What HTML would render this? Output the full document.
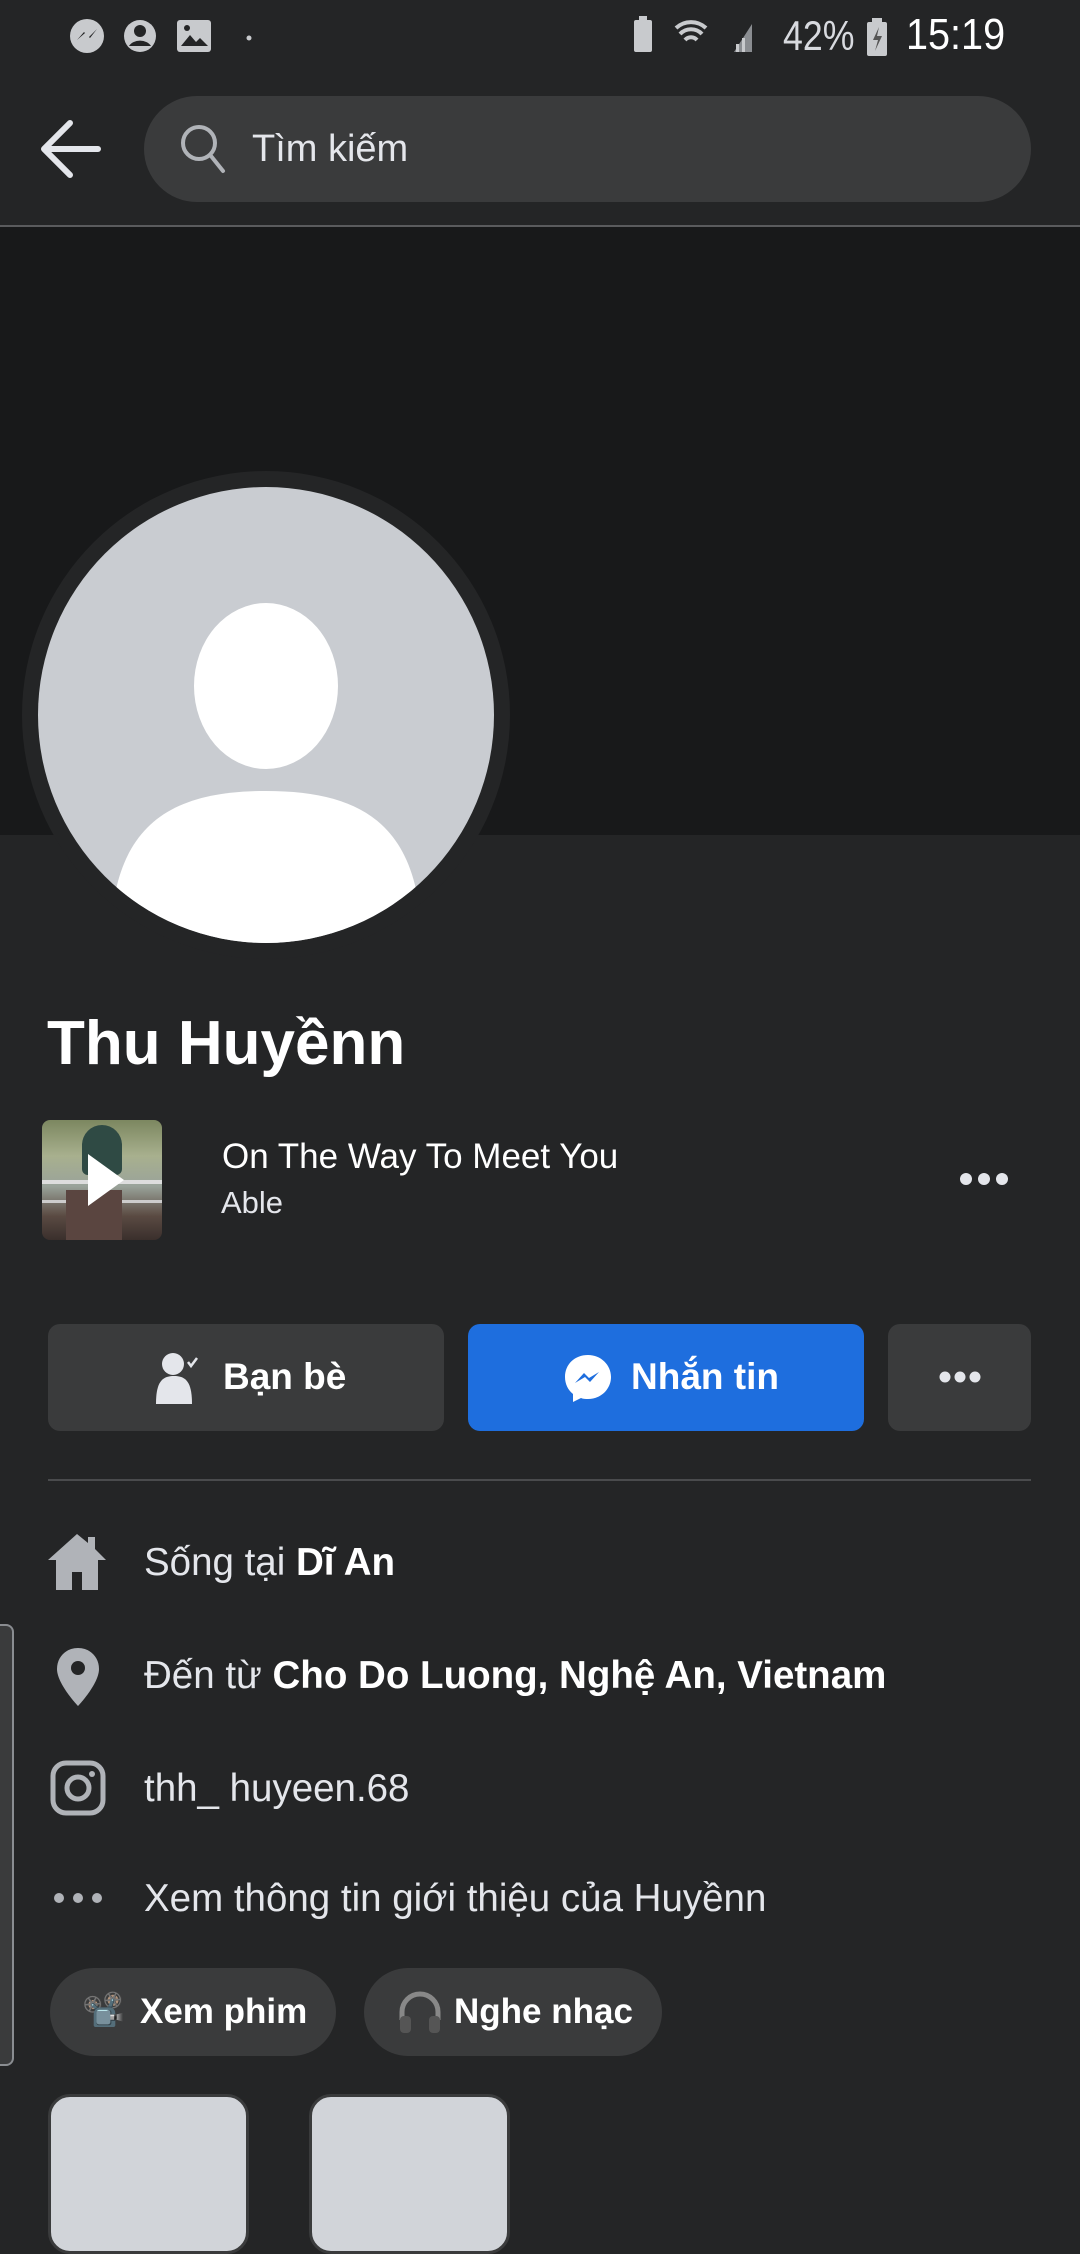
<!DOCTYPE html>
<html><head><meta charset="utf-8"><style>
*{margin:0;padding:0;box-sizing:border-box}
body{width:1080px;height:2220px;background:#242526;font-family:"Liberation Sans","Noto Sans CJK SC",sans-serif;color:#e4e6eb;position:relative;overflow:hidden}
.a{position:absolute}
.t{white-space:nowrap}
</style></head><body>
<div class="a" style="left:0;top:0;width:1080px;height:226px;background:#242526"></div>
<svg class="a" style="top:12px;left:66px" width="200" height="48" viewBox="0 0 200 48">
<circle cx="21" cy="24" r="17" fill="#c8cacd"/><path d="M11 28l7-8 5 5 8-8-7 9-5-5z" fill="#242526"/>
<circle cx="74" cy="24" r="16" fill="#c8cacd"/><circle cx="74" cy="19" r="6" fill="#242526"/><path d="M63 34a12 9 0 0 1 22 0z" fill="#242526"/>
<rect x="111" y="8" width="34" height="32" rx="3" fill="#c8cacd"/><path d="M115 34l9-11 6 7 4-4 8 8z" fill="#242526"/><circle cx="121" cy="16" r="3" fill="#242526"/>
<circle cx="183" cy="26" r="2.5" fill="#c8cacd"/>
</svg>
<svg class="a" style="left:632px;top:14px" width="140" height="44" viewBox="0 0 140 44">
<rect x="2" y="6" width="18" height="32" rx="2" fill="#c8cacd"/><rect x="7" y="2" width="8" height="5" fill="#c8cacd"/>
<path d="M44 14a22 22 0 0 1 30 0M48 20a15 15 0 0 1 22 0M53 26a8 8 0 0 1 12 0" stroke="#c8cacd" stroke-width="4" fill="none"/>
<path d="M102 38l18-28v28z" fill="#8a8d91"/><rect x="104" y="30" width="3" height="8" fill="#c8cacd"/><rect x="110" y="24" width="3" height="14" fill="#c8cacd"/>
</svg>
<div class="a t" style="left:783px;top:12px;font-size:42px;color:#d8dadf;transform:scaleX(0.85);transform-origin:left">42%</div>
<svg class="a" style="left:866px;top:18px" width="22" height="40"><rect x="1" y="4" width="20" height="34" rx="2" fill="#c8cacd"/><rect x="6" y="0" width="10" height="5" fill="#c8cacd"/><path d="M13 9l-6 13h5l-3 11 7-15h-5z" fill="#555"/></svg>
<div class="a t" style="left:906px;top:10px;font-size:44px;color:#fff;transform:scaleX(0.9);transform-origin:left">15:19</div>
<svg class="a" style="left:38px;top:118px" width="66" height="62" viewBox="0 0 66 62"><path d="M60 31H8M32 5L6 31l26 26" stroke="#e4e6eb" stroke-width="6" fill="none" stroke-linecap="round" stroke-linejoin="round"/></svg>
<div class="a" style="left:144px;top:96px;width:887px;height:106px;border-radius:53px;background:#3a3b3c"></div>
<svg class="a" style="left:178px;top:122px" width="50" height="56"><circle cx="21" cy="21" r="16" stroke="#b0b3b8" stroke-width="4" fill="none"/><path d="M33 34l12 15" stroke="#b0b3b8" stroke-width="4" stroke-linecap="round"/></svg>
<div class="a t" style="left:252px;top:128px;font-size:38px;color:#e4e6eb">Tìm kiếm</div>
<div class="a" style="left:0;top:225px;width:1080px;height:2px;background:#5a5b5d"></div>
<div class="a" style="left:0;top:227px;width:1080px;height:608px;background:#18191a"></div>
<svg class="a" style="left:22px;top:471px" width="490" height="490" viewBox="0 0 490 490">
<defs><clipPath id="c"><circle cx="244" cy="244" r="228"/></clipPath></defs>
<circle cx="244" cy="244" r="244" fill="#242526"/>
<circle cx="244" cy="244" r="228" fill="#c9ccd1"/>
<g clip-path="url(#c)"><ellipse cx="244" cy="215" rx="72" ry="83" fill="#fff"/><path d="M88 480C88 360 140 320 244 320S400 360 400 480z" fill="#fff"/></g>
</svg>
<div class="a t" style="left:47px;top:1008px;font-size:62px;font-weight:bold;color:#fff">Thu Huyềnn</div>
<div class="a" style="left:42px;top:1120px;width:120px;height:120px;border-radius:8px;overflow:hidden;background:linear-gradient(180deg,#7c8760 0%,#a8b08e 30%,#9aa39a 55%,#5a4a42 80%,#3a2f2c 100%)">
<div class="a" style="left:0;top:60px;width:120px;height:4px;background:#ddd"></div>
<div class="a" style="left:0;top:80px;width:120px;height:3px;background:#ccc"></div>
<div class="a" style="left:24px;top:70px;width:56px;height:50px;background:#5a4540"></div>
<div class="a" style="left:40px;top:5px;width:40px;height:50px;border-radius:20px 20px 6px 6px;background:#2f4a44"></div>
</div>
<svg class="a" style="left:84px;top:1150px" width="44" height="60"><path d="M4 4l36 26-36 26z" fill="#fff"/></svg>
<div class="a t" style="left:222px;top:1137px;font-size:35px;color:#fff">On The Way To Meet You</div>
<div class="a t" style="left:221px;top:1185px;font-size:31px;color:#e4e6eb">Able</div>
<svg class="a" style="left:958px;top:1170px" width="52" height="18"><circle cx="8" cy="9" r="6" fill="#e4e6eb"/><circle cx="26" cy="9" r="6" fill="#e4e6eb"/><circle cx="44" cy="9" r="6" fill="#e4e6eb"/></svg>
<div class="a" style="left:48px;top:1324px;width:396px;height:107px;border-radius:12px;background:#3a3b3c"></div>
<svg class="a" style="left:154px;top:1352px" width="44" height="52"><circle cx="19" cy="12" r="11" fill="#e4e6eb"/><path d="M2 52c0-22 6-28 18-28s18 6 18 28z" fill="#e4e6eb"/><path d="M34 10l3 4 6-8" stroke="#e4e6eb" stroke-width="2.5" fill="none"/></svg>
<div class="a t" style="left:223px;top:1356px;font-size:37px;font-weight:bold;color:#fff">Bạn bè</div>
<div class="a" style="left:468px;top:1324px;width:396px;height:107px;border-radius:12px;background:#1e6ede"></div>
<svg class="a" style="left:563px;top:1353px" width="50" height="50" viewBox="0 0 50 50"><path d="M25 2C12 2 2 11 2 24c0 7 3 13 8 17v8l8-4c2 1 5 1 7 1 13 0 23-10 23-22S38 2 25 2z" fill="#fff"/><path d="M12 30l9-10 5 5 10-6-9 10-5-5z" fill="#1e6ede"/></svg>
<div class="a t" style="left:631px;top:1356px;font-size:37px;font-weight:bold;color:#fff">Nhắn tin</div>
<div class="a" style="left:888px;top:1324px;width:143px;height:107px;border-radius:12px;background:#3a3b3c"></div>
<svg class="a" style="left:938px;top:1368px" width="44" height="18"><circle cx="7" cy="9" r="5.5" fill="#e4e6eb"/><circle cx="22" cy="9" r="5.5" fill="#e4e6eb"/><circle cx="37" cy="9" r="5.5" fill="#e4e6eb"/></svg>
<div class="a" style="left:48px;top:1479px;width:983px;height:2px;background:#4a4b4d"></div>
<svg class="a" style="left:46px;top:1532px" width="62" height="60" viewBox="0 0 62 60"><path d="M31 2L2 28h8v30h16V40h10v18h16V28h8L49 17V5h-7v6z" fill="#b0b3b8"/></svg>
<div class="a t" style="left:144px;top:1541px;font-size:38.5px;color:#e4e6eb">Sống tại <b style="color:#fff">Dĩ An</b></div>
<svg class="a" style="left:54px;top:1646px" width="48" height="62" viewBox="0 0 48 62"><path d="M24 2C12 2 3 11 3 23c0 15 21 37 21 37s21-22 21-37C45 11 36 2 24 2z" fill="#b0b3b8"/><circle cx="24" cy="22" r="7" fill="#242526"/></svg>
<div class="a t" style="left:144px;top:1654px;font-size:38.5px;color:#e4e6eb">Đến từ <b style="color:#fff">Cho Do Luong, Nghệ An, Vietnam</b></div>
<svg class="a" style="left:50px;top:1760px" width="56" height="56" viewBox="0 0 56 56"><rect x="3" y="3" width="50" height="50" rx="13" stroke="#b0b3b8" stroke-width="5" fill="none"/><circle cx="28" cy="28" r="11" stroke="#b0b3b8" stroke-width="5" fill="none"/><circle cx="42" cy="14" r="3" fill="#b0b3b8"/></svg>
<div class="a t" style="left:144px;top:1767px;font-size:38.5px;color:#e4e6eb">thh_ huyeen.68</div>
<svg class="a" style="left:52px;top:1890px" width="52" height="16"><circle cx="7" cy="8" r="5" fill="#b0b3b8"/><circle cx="26" cy="8" r="5" fill="#b0b3b8"/><circle cx="45" cy="8" r="5" fill="#b0b3b8"/></svg>
<div class="a t" style="left:144px;top:1877px;font-size:38.5px;color:#e4e6eb">Xem thông tin giới thiệu của Huyềnn</div>
<div class="a" style="left:50px;top:1968px;width:286px;height:88px;border-radius:44px;background:#3a3b3c"></div>
<div class="a t" style="left:82px;top:1990px;font-size:34px">📽️</div>
<div class="a t" style="left:140px;top:1992px;font-size:35px;font-weight:bold;color:#fff">Xem phim</div>
<div class="a" style="left:364px;top:1968px;width:298px;height:88px;border-radius:44px;background:#3a3b3c"></div>
<svg class="a" style="left:397px;top:1990px" width="46" height="44" viewBox="0 0 46 44"><path d="M5 30V22a18 18 0 0 1 36 0v8" stroke="#888" stroke-width="5" fill="none"/><rect x="3" y="26" width="11" height="17" rx="4" fill="#555"/><rect x="32" y="26" width="11" height="17" rx="4" fill="#555"/></svg>
<div class="a t" style="left:454px;top:1992px;font-size:35px;font-weight:bold;color:#fff">Nghe nhạc</div>
<div class="a" style="left:48px;top:2094px;width:201px;height:160px;border-radius:22px;background:#d1d4d9;border:3px solid #3a3b3c"></div>
<div class="a" style="left:309px;top:2094px;width:201px;height:160px;border-radius:22px;background:#d1d4d9;border:3px solid #3a3b3c"></div>
<div class="a" style="left:0;top:1624px;width:14px;height:442px;border-radius:0 8px 8px 0;background:#3a3b3c;border:2px solid #8a8d91;border-left:none"></div>
</body></html>
